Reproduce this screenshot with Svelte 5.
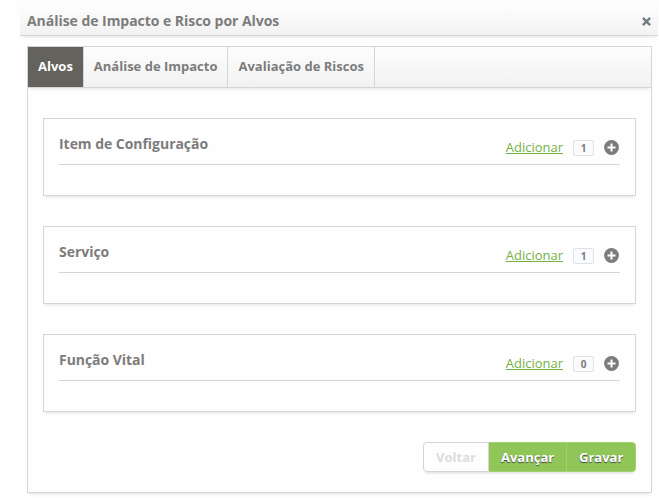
<script>
  const tabs = ['Alvos', 'Análise de Impacto', 'Avaliação de Riscos'];
  const targets = [
    { name: 'Item de Configuração', count: 1 },
    { name: 'Serviço', count: 1 },
    { name: 'Função Vital', count: 0 }
  ];
  let active = $state(0);
</script>

<div class="dialog">
  <header>
    <h1>Análise de Impacto e Risco por Alvos</h1>
    <button class="close" aria-label="Fechar">
      <svg width="9" height="9" viewBox="0 0 9 9"><path d="M.9 .9 8.1 8.1M8.1 .9 .9 8.1" stroke="#6f7c82" stroke-width="2.3" /></svg>
    </button>
  </header>
  <section class="panel">
    <nav>
      {#each tabs as tab, i}
        <button class="tab" class:active={active === i} onclick={() => (active = i)}>{tab}</button>
      {/each}
    </nav>
    <div class="cards">
      {#each targets as target}
        <article>
          <div class="row">
            <h2>{target.name}</h2>
            <a href="#add">Adicionar</a>
            <span class="badge">{target.count}</span>
            <svg class="plus" width="15" height="15" viewBox="0 0 15 15">
              <circle cx="7.5" cy="7.5" r="7.4" fill="#7c7c7c" />
              <path d="M7.5 3.5v8M3.5 7.5h8" stroke="#fff" stroke-width="2" />
            </svg>
          </div>
        </article>
      {/each}
    </div>
    <footer>
      <div class="group">
        <button class="back" disabled>Voltar</button>
        <button class="next">Avançar</button>
        <button class="save">Gravar</button>
      </div>
    </footer>
  </section>
</div>

<style>
  :global(body) { background: #fefefe; }
  .dialog, button {
    font-family: 'Open Sans', sans-serif;
    color: #7c7c7c;
  }
  .dialog { padding: 6px 0 0 20px; box-sizing: border-box; height: 498px; overflow: hidden; }
  button { border: 0; margin: 0; background: none; }
  header {
    display: flex;
    justify-content: space-between;
    box-sizing: border-box;
    width: 638px;
    height: 30px;
    padding: 0 7px;
    border-bottom: 1px solid #d5d5d5;
    background: linear-gradient(#fdfdfd, #f2f2f2);
    box-shadow: 0 3px 3px -2px rgba(0, 0, 0, .1);
  }
  h1, h2 { margin: 0; font-size: 14px; font-weight: 700; line-height: 20px; letter-spacing: -.04px; }
  h1 { padding-top: 5px; }
  .close { padding: 10px 0 0; line-height: 0; height: 20px; }
  .close svg { display: block; }
  .panel {
    box-sizing: border-box;
    width: 625px;
    height: 447px;
    margin: 10px 0 0 7px;
    border: 1px solid #d5d5d5;
    background: #fefefe;
    box-shadow: 0 3px 3px -2px rgba(0, 0, 0, .12);
  }
  nav {
    display: flex;
    height: 40px;
    border-bottom: 1px solid #d5d5d5;
    background: linear-gradient(#fdfdfd, #f2f2f2);
    box-shadow: 0 3px 3px -2px rgba(0, 0, 0, .12);
  }
  .tab {
    padding: 0 10px 2px;
    border-right: 1px solid #d5d5d5;
    font-size: 13px;
    font-weight: 700;
    line-height: 38px;
    white-space: nowrap;
  }
  .tab.active { background: #64625c; color: #fff; }
  .cards { display: flex; flex-direction: column; gap: 30px; padding: 30px 15px 0; }
  article {
    box-sizing: border-box;
    height: 78px;
    padding: 15px;
    border: 1px solid #d5d5d5;
    box-shadow: 0 3px 3px -2px rgba(0, 0, 0, .12);
  }
  .row {
    display: flex;
    align-items: flex-start;
    height: 30px;
    border-bottom: 1px solid #d5d5d5;
  }
  h2 { flex: 1; }
  a { margin-top: 3px; color: #75b043; font-size: 13px; line-height: 20px; text-decoration: underline; }
  .badge {
    box-sizing: border-box;
    width: 21px;
    height: 16px;
    margin: 6px 10px 0 10px;
    border: 1px solid #e0e2e6;
    border-radius: 2px;
    background: #fafbfc;
    font-size: 10px;
    font-weight: 700;
    line-height: 15px;
    text-align: center;
  }
  .plus { margin: 6px 1px 0 0; }
  footer { display: flex; justify-content: flex-end; padding: 30px 15px 0; }
  .group { display: flex; height: 30px; border-radius: 4px; box-shadow: 0 3px 3px -2px rgba(0, 0, 0, .15); }
  .group button {
    box-sizing: border-box;
    padding: 0 12px;
    border: 1px solid #9fd06f;
    background: #8fc657;
    color: #fff;
    font-size: 13px;
    font-weight: 700;
    line-height: 28px;
    text-shadow: 0 1px 1px #444;
  }
  .group .back {
    width: 66px;
    border-color: #d5d5d5;
    border-radius: 4px 0 0 4px;
    background: #fefefe;
    color: #dcdcdc;
    text-shadow: none;
  }
  .group .next { width: 77px; border-width: 1px 0; }
  .group .save { width: 70px; border-radius: 0 4px 4px 0; }
</style>
